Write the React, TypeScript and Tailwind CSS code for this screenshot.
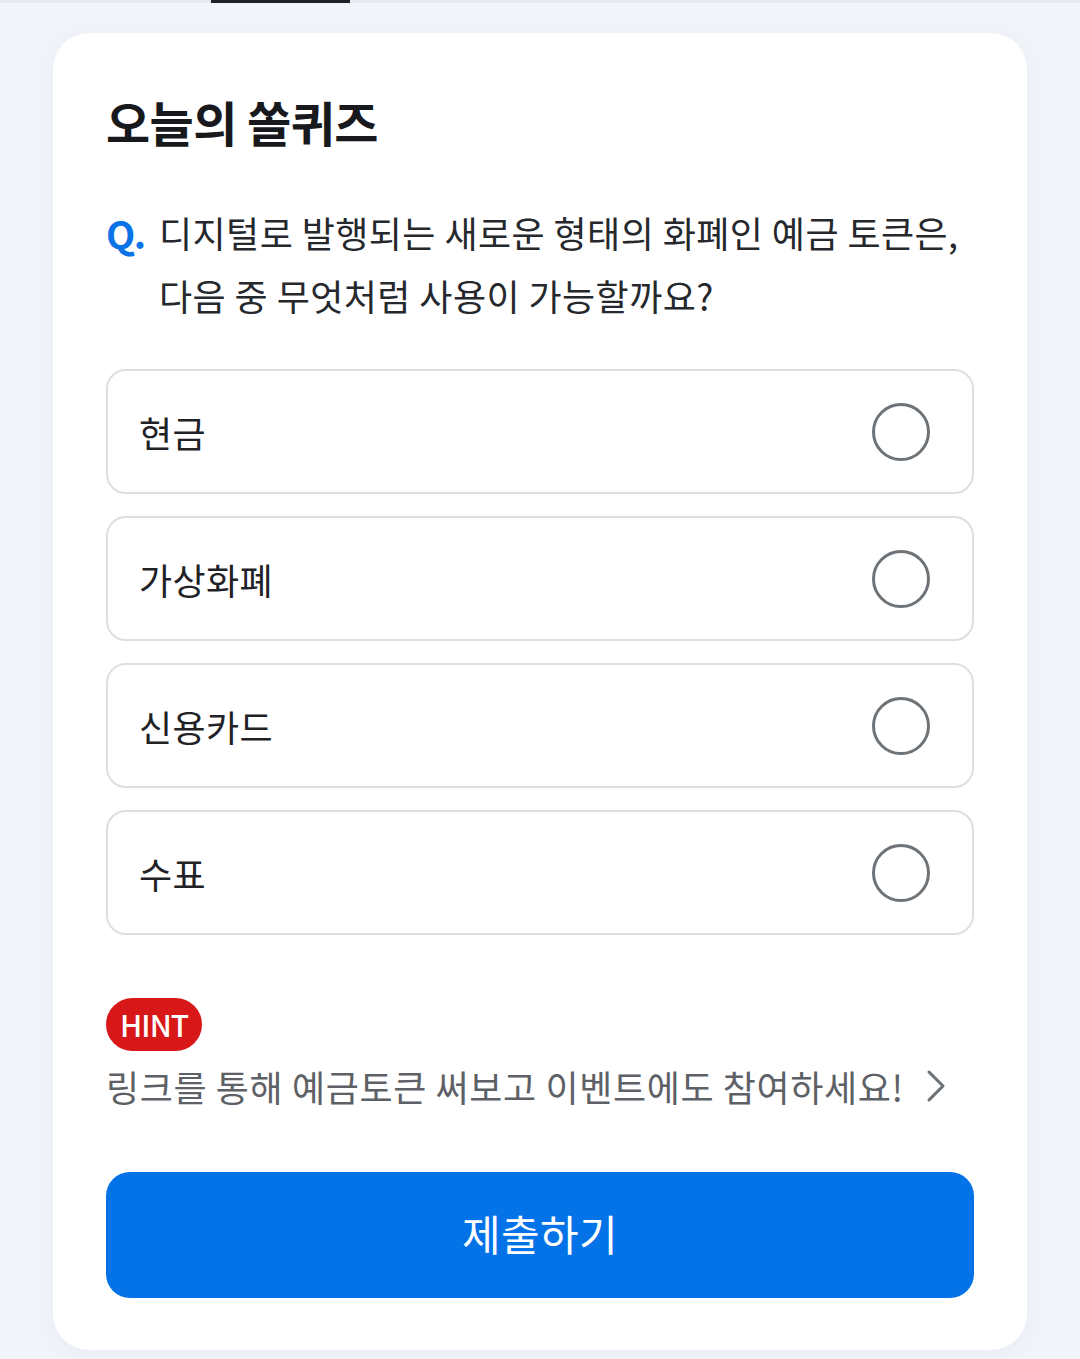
import { ChevronRight } from "lucide-react";

const options = ["현금", "가상화폐", "신용카드", "수표"];

export default function App() {
    return (
        <div
            className="min-h-[1359px] w-[1080px] bg-[#f1f4f9] relative"
            style={{ fontFamily: '"Noto Sans CJK KR", "Noto Sans", sans-serif' }}
        >
            {/* top tab strip */}
            <div className="h-[3px] w-full bg-[#e8ecf2] flex">
                <div className="ml-[211px] w-[139px] h-[3px] bg-[#1f2329]" />
            </div>

            <div className="pt-[30px] px-[53px]">
                <div className="bg-white rounded-[36px] px-[53px] pt-[58px] pb-[52px] shadow-[0_4px_24px_rgba(30,50,90,0.04)]">
                    <h1 className="text-[48px] leading-[60px] font-bold text-[#17191c] tracking-[-0.012em]">
                        오늘의 쏠퀴즈
                    </h1>

                    <div className="mt-[50px] flex items-start">
                        <span className="text-[38px] leading-[63px] font-bold text-[#0a73e6] w-[53px] shrink-0 tracking-[-0.04em]">
                            Q.
                        </span>
                        <p className="text-[36px] leading-[63px] text-[#25282c] tracking-[0.012em]">
                            디지털로 발행되는 새로운 형태의 화폐인 예금 토큰은,
                            <br />
                            다음 중 무엇처럼 사용이 가능할까요?
                        </p>
                    </div>

                    <div className="mt-[42px] flex flex-col gap-[22px]">
                        {options.map((opt) => (
                            <div
                                key={opt}
                                className="h-[125px] border-2 border-[#dcdfe3] rounded-[20px] flex items-center justify-between pl-[31px] pr-[42px]"
                            >
                                <span className="text-[36px] text-[#1f2226] tracking-[0.01em]">{opt}</span>
                                <span className="w-[58px] h-[58px] rounded-full border-[3px] border-[#6e7378]" />
                            </div>
                        ))}
                    </div>

                    <div className="mt-[63px]">
                        <span className="inline-flex items-center h-[53px] px-[14px] rounded-full bg-[#d71718] text-white text-[30px] font-medium tracking-[-0.03em]">
                            HINT
                        </span>
                        <div className="mt-[6px] flex items-center">
                            <span className="text-[36px] leading-[58px] text-[#5d6166] tracking-[0.017em]">
                                링크를 통해 예금토큰 써보고 이벤트에도 참여하세요!
                            </span>
                            <ChevronRight className="ml-[4px] w-[56px] h-[56px] text-[#6b7075]" strokeWidth={1.3} />
                        </div>
                    </div>

                    <button className="mt-[57px] w-full h-[126px] rounded-[24px] bg-[#0573e8] text-white text-[42px] leading-[42px] pb-[4px] tracking-[0.01em]">
                        제출하기
                    </button>
                </div>
            </div>
        </div>
    );
}
